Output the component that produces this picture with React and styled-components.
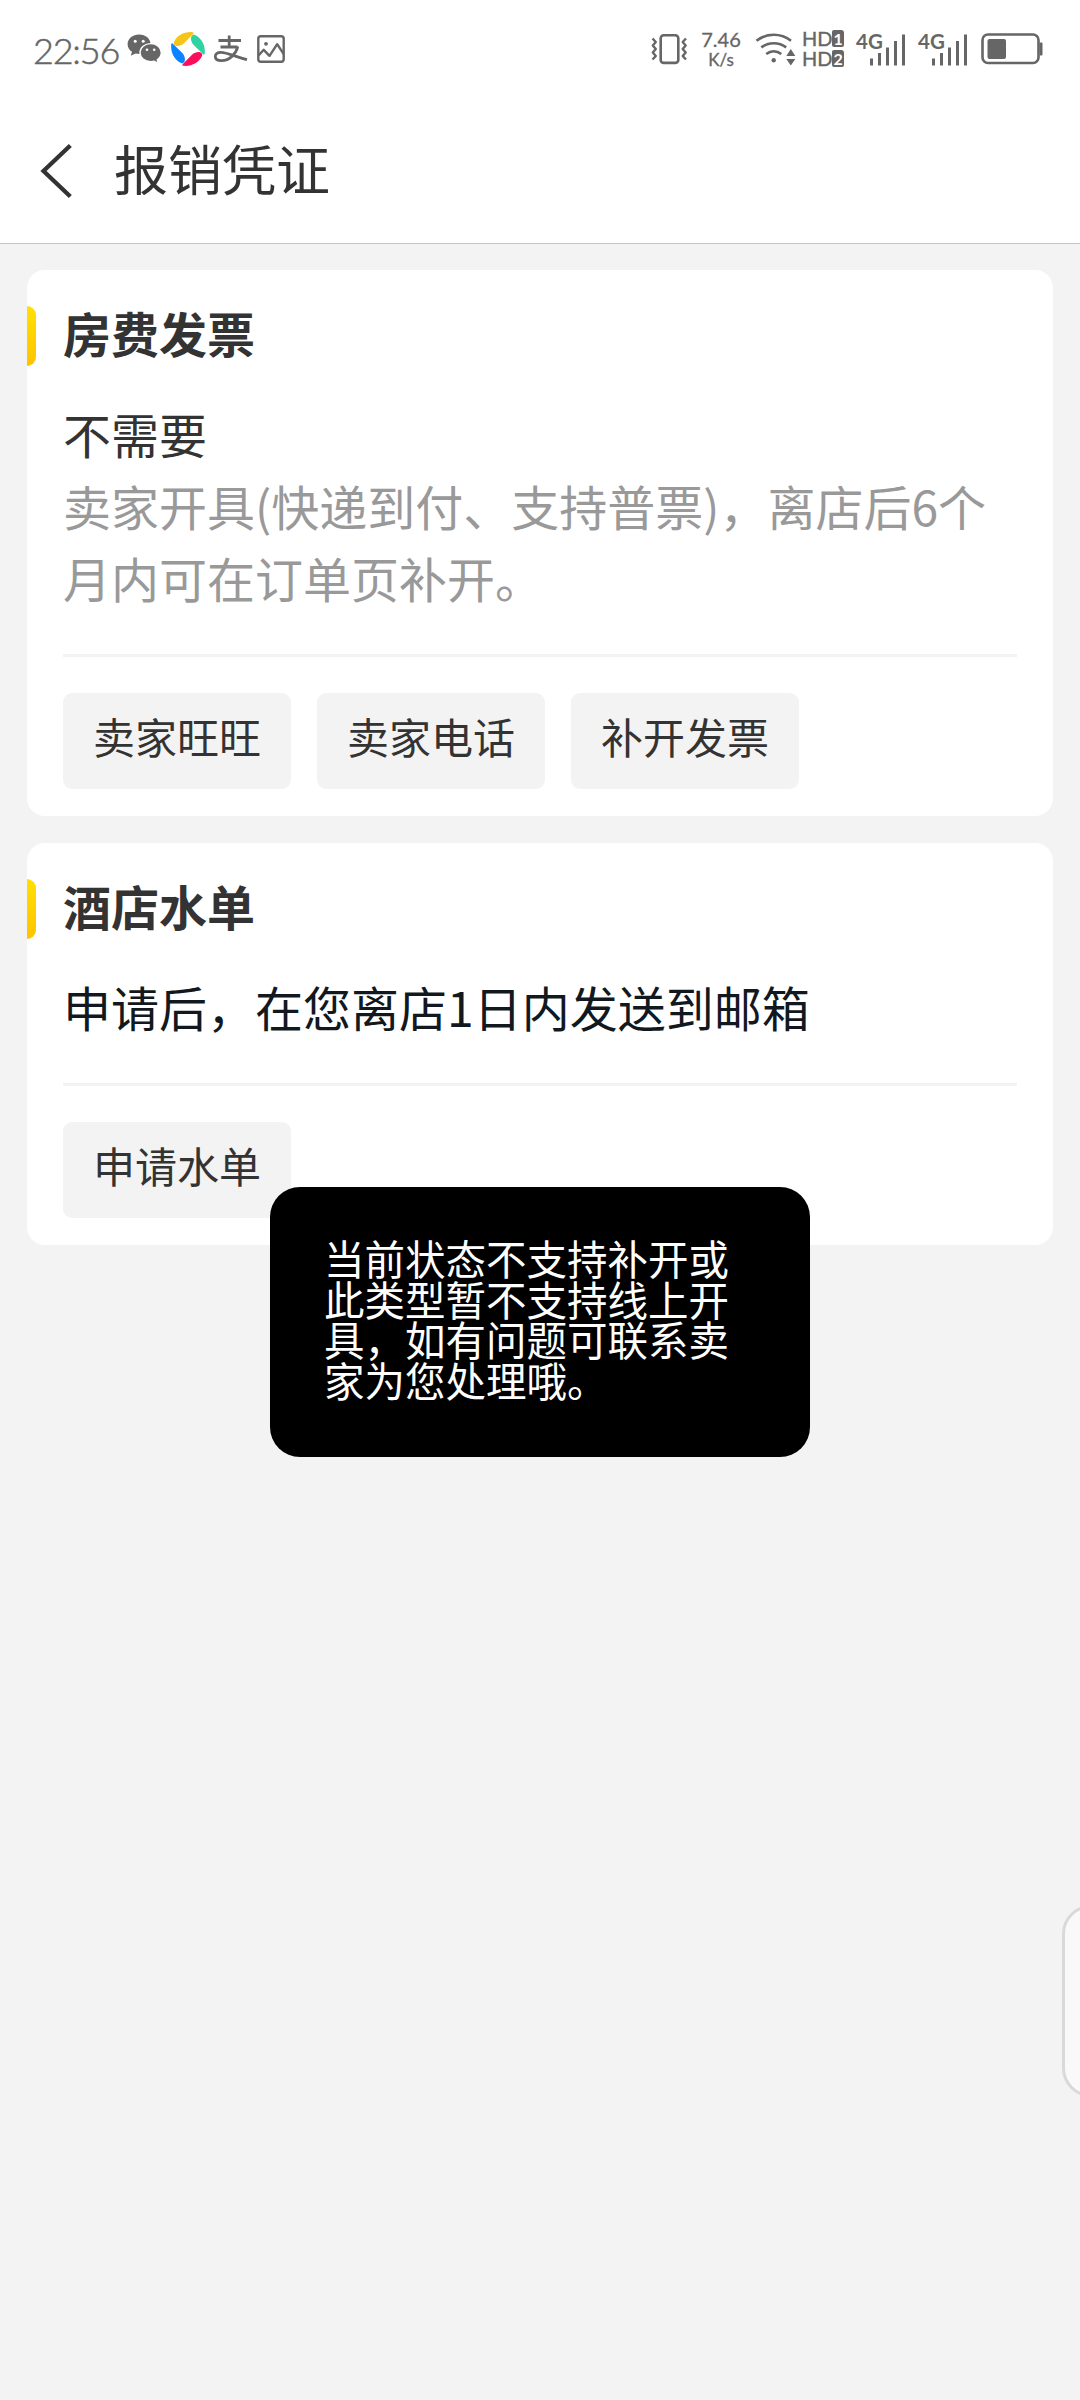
import React from 'react'
import styled, { createGlobalStyle } from 'styled-components';

const GRAY = '#666666';

const invoiceCards = [
    {
        title: "房费发票",
        status: "不需要",
        hint: "卖家开具(快递到付、支持普票)，离店后6个月内可在订单页补开。",
        actions: ["卖家旺旺", "卖家电话", "补开发票"]
    },
    {
        title: "酒店水单",
        note: "申请后，在您离店1日内发送到邮箱",
        actions: ["申请水单"]
    }
];

const WechatIcon = () => (
    <Icon $w={35} $h={30} viewBox="0 0 35 30">
        <path fill={GRAY} d="M12.2 0.5C5.6 0.5 0.6 4.8 0.6 10.2c0 3.2 1.7 5.9 4.4 7.6l-1.2 4 4.8-2.4c1.2.3 2.4.5 3.6.5 6.5 0 11.4-4.300 11.4-9.700S18.800 0.500 12.200 0.500z" />
        <path fill={GRAY} stroke="#fff" strokeWidth="1.4" d="M23.700 9.600c-6 0-10.700 3.900-10.700 9s4.700 9.100 10.700 9.100c1.200 0 2.300-.1 3.400-.5l4.200 2.200-1-3.600c2.500-1.700 4-4.200 4-7.200 0-5.100-4.700-9-10.600-9z" />
        <circle cx="8.200" cy="7.300" r="1.500" fill="#fff" />
        <circle cx="16.200" cy="7.300" r="1.500" fill="#fff" />
        <circle cx="20" cy="15.800" r="1.300" fill="#fff" />
        <circle cx="27.200" cy="15.800" r="1.300" fill="#fff" />
    </Icon>
)

// one blade, repeated at every quarter turn
const BLADE = "M3 10C6 3.500 13 -0.500 21.500 0.200c1.300.2 1.500 1.100.6 1.900L13 11.300c-3.200 3-8.600 3.800-10 .9-.3-.7-.3-1.500 0-2.200z";

const SwirlIcon = () => (
    <Icon $w={34} $h={34} viewBox="0 0 34 34">
        <path fill="#f5c518" d={BLADE} />
        <path fill="#2fd3a2" d={BLADE} transform="rotate(90 17 17)" />
        <path fill="#fb0d5c" d={BLADE} transform="rotate(180 17 17)" />
        <path fill="#0a84ff" d={BLADE} transform="rotate(270 17 17)" />
    </Icon>
)

const PayIcon = () => (
    <Icon $w={34} $h={28} viewBox="0 0 34 28">
        <g fill="none" stroke={GRAY} strokeWidth="2.800">
            <path d="M4.500 5.500h22.500M15.200 0.500v12M6.500 12h17" />
            <path d="M23.800 11.500C22 19 15.500 25.600 7.500 25.600c-4 0-6.200-1.600-6.200-4.100 0-2.600 2.400-4.100 5.400-4.100 6.500 0 14.500 4.200 26.300 7.300" />
        </g>
    </Icon>
)

const PictureIcon = () => (
    <Icon $w={28} $h={28} viewBox="0 0 28 28">
        <g fill="none" stroke={GRAY} strokeWidth="2.400">
            <rect x="1.300" y="1.300" width="25.400" height="25.400" rx="2.500" />
            <path d="M1.500 20.500l5.200-5.700 5.800 6 7.700-11.600 6.500 10" strokeLinejoin="round" />
        </g>
        <circle cx="9" cy="8.800" r="1.900" fill={GRAY} />
    </Icon>
)

const VibrateIcon = () => (
    <Icon $w={37} $h={30} viewBox="0 0 37 30">
        <g fill="none" stroke={GRAY} strokeWidth="2.400" strokeLinejoin="round">
            <rect x="9.700" y="1.300" width="17.600" height="27.600" rx="3" strokeWidth="2.600" />
            <path d="M1.500 4.500l3.300 3.500-3 3.500 3 3.500-3 3.500 3 3.500-3.300 3.500" />
            <path d="M35 4.500l-3.300 3.500 3 3.500-3 3.500 3 3.500-3 3.500 3.300 3.500" />
        </g>
    </Icon>
)

const WifiIcon = () => (
    <Icon $w={36} $h={34} viewBox="-1.5 0 36 34">
        <g fill="none" stroke={GRAY} strokeWidth="2.600">
            <path d="M1 8.800C11 0.800 25.500 0.800 35.500 8.800" />
            <path d="M5.800 15.400c7.300-5.600 17.600-5.600 24.900 0" />
            <path d="M10.700 22c4.600-3.500 10.500-3.500 15.100 0" />
        </g>
        <circle cx="18.200" cy="28.300" r="2.200" fill={GRAY} />
        <path fill={GRAY} d="M35.300 17l4.500 7h-9zM35.300 33.500l4.500-6.500h-9z" />
    </Icon>
)

const SignalIcon = () => (
    <Icon $w={50} $h={34} viewBox="0 0 50 34">
        <text x="0" y="16.500" fontFamily="Lato, sans-serif" fontSize="20.500" fontWeight="700" fill={GRAY}>4G</text>
        <g fill={GRAY}>
            <rect x="14" y="26.500" width="3" height="7" />
            <rect x="22" y="21" width="3" height="12.500" />
            <rect x="30" y="15.500" width="3" height="18" />
            <rect x="38" y="9" width="3" height="24.500" />
            <rect x="46" y="2.500" width="3" height="31" />
        </g>
    </Icon>
)

const BatteryIcon = () => (
    <Icon $w={62} $h={32} viewBox="0 0 62 32">
        <rect x="2.500" y="1.500" width="56" height="28.500" rx="5.500" fill="none" stroke={GRAY} strokeWidth="2.600" />
        <rect x="7.500" y="6" width="18.500" height="20" rx="2" fill={GRAY} />
        <rect x="59.500" y="9.500" width="3" height="13" rx="1" fill={GRAY} />
    </Icon>
)

const BackIcon = () => (
    <Icon $w={32} $h={54} viewBox="0 0 32 54">
        <path d="M30.300 1.500L3.500 27l26.800 25.500" fill="none" stroke="#333" strokeWidth="4.300" />
    </Icon>
)

class InvoiceCard extends React.Component {
    render() {
        const { title, status, hint, note, actions } = this.props;
        return (
            <Card>
                <CardTitle><span>{title}</span></CardTitle>
                <CardBody>
                    {status && <Line>{status}</Line>}
                    {hint && <Line $color="#999">{hint}</Line>}
                    {note && <Line $color="#111820">{note}</Line>}
                </CardBody>
                <Actions>
                    {actions.map((a) => <ActionButton key={a}>{a}</ActionButton>)}
                </Actions>
            </Card>
        )
    }
}

export default function App() {
    return (
        <Page>
            <GlobalStyle />
            <StatusBar>
                <StatusGroup $gap={9}>
                    <Clock>22:56</Clock>
                    <WechatIcon />
                    <SwirlIcon />
                    <PayIcon />
                    <PictureIcon />
                </StatusGroup>
                <StatusGroup $gap={12}>
                    <VibrateIcon />
                    <Speed>
                        <span>7.46</span>
                        <small>K/s</small>
                    </Speed>
                    <WifiIcon />
                    <HdStack>
                        <HdRow>HD<HdBadge>1</HdBadge></HdRow>
                        <HdRow>HD<HdBadge>2</HdBadge></HdRow>
                    </HdStack>
                    <SignalIcon />
                    <SignalIcon />
                    <BatteryIcon />
                </StatusGroup>
            </StatusBar>
            <Header>
                <BackIcon />
                <HeaderTitle>报销凭证</HeaderTitle>
            </Header>
            <Content>
                {invoiceCards.map((c) => <InvoiceCard key={c.title} {...c} />)}
            </Content>
            <Toast>当前状态不支持补开或此类型暂不支持线上开具，如有问题可联系卖家为您处理哦。</Toast>
            <SideHandle />
        </Page>
    )
}

const GlobalStyle = createGlobalStyle`
    * { box-sizing: border-box; }
    body {
        margin: 0;
        background: #f3f3f3;
        font-family: "Noto Sans CJK SC", sans-serif;
    }
`;

const Page = styled.div`
    position: relative;
    width: 1080px;
    height: 2400px;
    overflow: hidden;
    background: #f3f3f3;
    color: #333;
`;

const Icon = styled.svg`
    display: block;
    flex: none;
    width: ${p => p.$w}px;
    height: ${p => p.$h}px;
    overflow: visible;
`;

const StatusBar = styled.div`
    display: flex;
    justify-content: space-between;
    height: 98px;
    padding: 0 38px 0 33px;
    background: #fff;
    color: ${GRAY};
    font-family: Lato, sans-serif;
`;

const StatusGroup = styled.div`
    display: flex;
    align-items: center;
    height: 98px;
    gap: ${p => p.$gap}px;
`;

const Clock = styled.div`
    width: 85px;
    padding-top: 2px;
    font-size: 36px;
    font-weight: 300;
    line-height: 40px;
    letter-spacing: -1.2px;
    white-space: nowrap;
    -webkit-text-stroke: 0.5px ${GRAY};
`;

const Speed = styled.div`
    display: flex;
    flex-direction: column;
    align-items: center;
    width: 42px;
    padding-top: 1px;
    font-size: 20px;
    line-height: 21px;
    -webkit-text-stroke: 0.3px ${GRAY};
    small {
        font-size: 17px;
        line-height: 20px;
    }
`;

const HdStack = styled.div`
    display: flex;
    flex-direction: column;
    gap: 3px;
    width: 42px;
    margin-top: -2px;
`;

const HdRow = styled.div`
    display: flex;
    align-items: center;
    font-size: 20px;
    line-height: 17px;
    -webkit-text-stroke: 0.4px ${GRAY};
`;

const HdBadge = styled.span`
    width: 12px;
    height: 17px;
    border-radius: 2px 3px 2px 2px;
    background: ${GRAY};
    color: #fff;
    font-size: 16px;
    font-weight: 700;
    line-height: 17px;
    text-align: center;
    -webkit-text-stroke: 0;
`;

const Header = styled.div`
    display: flex;
    align-items: center;
    gap: 42px;
    height: 146px;
    padding: 0 40px 0 40px;
    border-bottom: 1px solid #c3c7c6;
    background: #fff;
`;

const HeaderTitle = styled.div`
    padding-bottom: 6px;
    font-size: 54px;
    line-height: 72px;
`;

const Content = styled.div`
    display: flex;
    flex-direction: column;
    gap: 27px;
    padding: 26px 27px;
`;

const Card = styled.div`
    padding: 36px 0 27px;
    border-radius: 18px;
    background: #fff;
`;

const CardTitle = styled.div`
    display: flex;
    align-items: center;
    gap: 27px;
    height: 60px;
    font-size: 48px;
    font-weight: 700;
    line-height: 60px;
    &::before {
        content: "";
        width: 9px;
        height: 60px;
        border-radius: 0 9px 9px 0;
        background: linear-gradient(#ffe000, #ffc300);
    }
    span {
        padding-bottom: 8px;
    }
`;

const CardBody = styled.div`
    margin: 31px 36px 0;
    padding-bottom: 41px;
    border-bottom: 3px solid #f3f3f3;
`;

const Line = styled.div`
    color: ${p => p.$color || "#333"};
    font-size: 48px;
    line-height: 72px;
`;

const Actions = styled.div`
    display: flex;
    gap: 26px;
    margin: 36px 36px 0;
`;

const ActionButton = styled.button`
    width: 228px;
    height: 96px;
    padding: 0 0 10px;
    border: none;
    border-radius: 9px;
    background: #f3f3f3;
    color: #333;
    font-family: inherit;
    font-size: 42px;
    line-height: 60px;
`;

const Toast = styled.div`
    position: absolute;
    top: 1187px;
    left: 270px;
    width: 540px;
    height: 270px;
    padding: 51px 54px 57px;
    border-radius: 30px;
    background: #000;
    color: #fff;
    font-size: 40.5px;
    line-height: 40.5px;
`;

const SideHandle = styled.div`
    position: absolute;
    top: 1905px;
    right: -40px;
    width: 58px;
    height: 192px;
    border: 3px solid #d9d9d9;
    border-radius: 32px;
    background: #f9f9f9;
`;
